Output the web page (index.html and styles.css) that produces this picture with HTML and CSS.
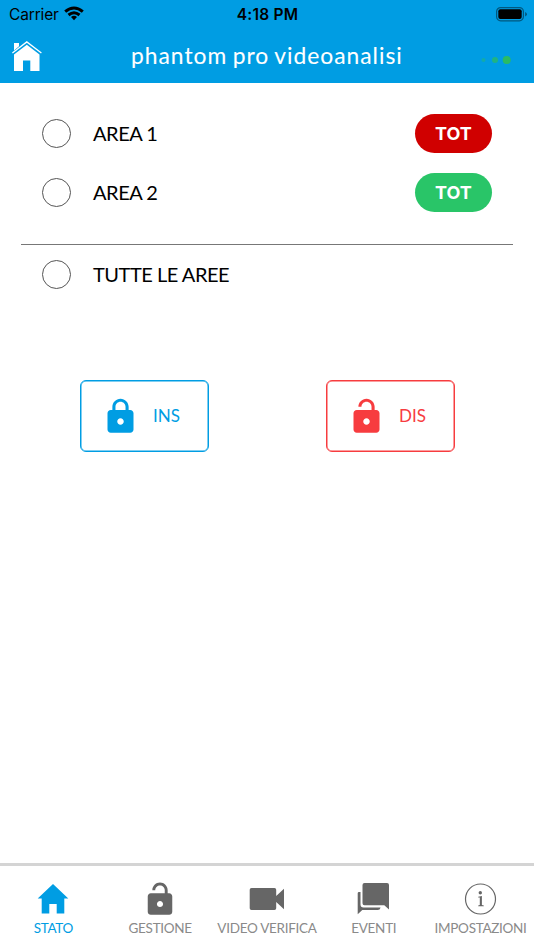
FILE: index.html
```html
<!DOCTYPE html>
<html lang="it">
<head>
<meta charset="utf-8">
<title>phantom pro videoanalisi</title>
<link rel="stylesheet" href="styles.css">
</head>
<body>
<div class="app">
  <header class="header">
    <div class="status">
      <div class="carrier"><span class="carrier-name">Carrier</span>
        <svg class="wifi" viewBox="0 0 20 15"><path d="M10 14.2 7 11.1Q10 8.6 13 11.1Z"/><path class="arc" d="M4.5 9Q10 4.4 15.5 9M1.2 5.700Q10-1.700 18.800 5.700"/></svg>
      </div>
      <span class="clock">4:18 PM</span>
      <svg class="battery" viewBox="0 0 32 15"><rect class="shell" x=".6" y=".6" width="26.8" height="13.2" rx="4"/><rect x="2.3" y="2.3" width="23.4" height="9.8" rx="2"/><path class="tip" d="M29.1 5Q31 5.8 31 7.2T29.1 9.4Z"/></svg>
    </div>
    <div class="titlebar">
      <svg class="house" viewBox="0 0 30 30"><path d="M2 2H7V5.200L2 9.500ZM2 13.500 14.800 3.800 27.500 13.500V30H18.300V19.500H11V30H2Z"/><path class="roof" d="M.4 12 14.800 .9 29.400 12"/></svg>
      <h1 class="title">phantom pro videoanalisi</h1>
      <svg class="dots" viewBox="0 0 32 10"><circle cx="2.500" cy="5" r="2" opacity=".45"/><circle cx="14" cy="5" r="3" opacity=".75"/><circle cx="25.700" cy="5" r="4"/></svg>
    </div>
  </header>
  <main class="main">
    <section class="areas">
      <div class="area"><span class="radio"></span><span class="label">AREA 1</span><span class="pill red">TOT</span></div>
      <div class="area"><span class="radio"></span><span class="label">AREA 2</span><span class="pill green">TOT</span></div>
    </section>
    <div class="area all"><span class="radio"></span><span class="label">TUTTE LE AREE</span></div>
    <div class="actions">
      <button class="action ins"><svg class="lock" viewBox="0 0 24 24"><path d="M18 8h-1V6c0-2.760-2.240-5-5-5S7 3.240 7 6v2H6c-1.100 0-2 .9-2 2v10c0 1.100.9 2 2 2h12c1.100 0 2-.9 2-2V10c0-1.100-.9-2-2-2zm-6 9c-1.100 0-2-.9-2-2s.9-2 2-2 2 .9 2 2-.9 2-2 2zm3.100-9H8.900V6c0-1.710 1.390-3.100 3.100-3.100s3.100 1.390 3.100 3.100v2z"/></svg><span class="action-label">INS</span></button>
      <button class="action dis"><svg class="lock" viewBox="0 0 24 24"><path d="M18 8h-1V6c0-2.760-2.240-5-5-5S7 3.240 7 6h1.900c0-1.710 1.390-3.100 3.100-3.100s3.100 1.390 3.100 3.100v2H6c-1.100 0-2 .9-2 2v10c0 1.100.9 2 2 2h12c1.100 0 2-.9 2-2V10c0-1.100-.9-2-2-2zm-6 9c-1.100 0-2-.9-2-2s.9-2 2-2 2 .9 2 2-.9 2-2 2z"/></svg><span class="action-label">DIS</span></button>
    </div>
  </main>
  <nav class="tabs">
    <div class="tab active"><svg class="icon" viewBox="0 0 38 38"><path d="M19 4 34.300 18.500H30.300V33.500H22.700V24H15.300V33.500H7.700V18.500H3.700Z"/></svg><span class="tab-label">STATO</span></div>
    <div class="tab"><svg class="icon" viewBox="-.4 -.7 24.800 24.800"><path d="M18 8h-1V6c0-2.760-2.240-5-5-5S7 3.240 7 6h1.900c0-1.710 1.390-3.100 3.100-3.100s3.100 1.390 3.100 3.100v2H6c-1.100 0-2 .9-2 2v10c0 1.100.9 2 2 2h12c1.100 0 2-.9 2-2V10c0-1.100-.9-2-2-2zm-6 9c-1.100 0-2-.9-2-2s.9-2 2-2 2 .9 2 2-.9 2-2 2z"/></svg><span class="tab-label">GESTIONE</span></div>
    <div class="tab"><svg class="icon" viewBox="0 0 38 38"><path d="M3.500 8H26.500Q28.200 8 28.200 9.700V16L36 8.800V29.200L28.200 22V28.300Q28.200 30 26.500 30H3.500Q1.700 30 1.700 28.300V9.700Q1.700 8 3.500 8Z"/></svg><span class="tab-label">VIDEO VERIFICA</span></div>
    <div class="tab"><svg class="icon" viewBox="1 0 38 38"><path d="M10.500 3H33Q35 3 35 5V29.500L30.300 25.300H10.500Q8.500 25.300 8.500 23.300V5Q8.500 3 10.500 3ZM5 12H6.500V24.500Q6.500 27.500 9.500 27.500H26.600Q26 30 23.800 30H8.300L3.700 34.300V13.200Q3.700 12 5 12Z"/></svg><span class="tab-label">EVENTI</span></div>
    <div class="tab"><svg class="icon" viewBox="0.500 0 38 38"><circle class="ring" cx="19" cy="19" r="15"/><circle cx="18.800" cy="12.800" r="1.700"/><path d="M16.700 16.800 20.400 16V25L22.300 25.600V26.200H16.700V25.600L18.300 25V17.600L16.700 17.500Z"/></svg><span class="tab-label">IMPOSTAZIONI</span></div>
  </nav>
</div>
</body>
</html>
```

FILE: styles.css
```css
* { box-sizing: border-box; }
body { margin: 0; background: #fff; color: #000; font-family: Lato, sans-serif; }
svg { display: block; flex: none; fill: currentColor; }
.app { width: 534px; height: 950px; display: flex; flex-direction: column; overflow: hidden; }
.header { height: 83px; background: #009de3; flex: none; }
.status { height: 28px; padding: 0 8px 0 9px; display: grid; grid-template-columns: 1fr auto 1fr; align-items: center; font: 16px/28px Inter, sans-serif; }
.carrier { display: flex; align-items: center; gap: 5px; }
.carrier-name { font-size: 15.500px; letter-spacing: -.15px; padding-top: 1px; }
.wifi { width: 20px; height: 15px; margin-top: -2px; }
.arc { fill: none; stroke: currentColor; stroke-width: 3; }
.clock { font-size: 15.500px; font-weight: 600; letter-spacing: .25px; padding-top: 1px; }
.battery { width: 32px; height: 15px; justify-self: end; margin: 0 -2px 1px 0; }
.shell { fill: none; stroke: #00587f; stroke-width: 1.200; }
.tip { fill: #00587f; }
.titlebar { height: 55px; padding: 0 21px 0 12px; display: grid; grid-template-columns: 119px 1fr 32px; align-items: center; color: #fff; }
.house { width: 30px; height: 30px; }
.roof { fill: none; stroke: #fff; stroke-width: 1.300; }
.title { margin: -2px 0 0; font-size: 22.800px; font-weight: 400; line-height: 28px; letter-spacing: 1px; word-spacing: -1.300px; white-space: nowrap; -webkit-text-stroke: .1px; }
.dots { width: 32px; height: 10px; color: #2abb63; justify-self: end; margin-top: 9px; }
.main { flex: 1; padding: 21px 21px 0; }
.areas { height: 141px; border-bottom: 1px solid #777; }
.area { display: flex; align-items: center; height: 59px; padding: 0 21px; font-size: 20px; }
.radio { width: 29px; height: 29px; border: 1.200px solid #555; border-radius: 50%; margin-right: 22px; }
.label { flex: 1; letter-spacing: -.470px; padding-bottom: 2px; }
.pill { width: 77px; height: 39px; border-radius: 20px; color: #fff; font: 650 18px/39px Inter, sans-serif; text-align: center; }
.red { background: #d00000; }
.green { background: #29c568; }
.actions { display: flex; justify-content: space-between; padding: 0 58px 0 59px; margin-top: 76px; }
.action { display: flex; align-items: center; width: 129px; height: 72px; padding: 0 0 0 20px; gap: 13px; border: 1px solid; box-shadow: inset 0 0 0 .5px currentColor; border-radius: 6px; background: #fff; font: 17px Lato, sans-serif; }
.action-label { padding-bottom: 1px; }
.lock { width: 39px; height: 39px; }
.ins { color: #009de3; }
.dis { color: #f73c3f; }
.tabs { height: 87px; border-top: 3px solid #d4d4d4; display: grid; grid-template-columns: repeat(5, 1fr); padding-top: 14px; }
.tab { display: flex; flex-direction: column; align-items: center; min-width: 0; color: #666; }
.icon { width: 38px; height: 38px; }
.tab-label { color: #8a8a8a; font-size: 13.500px; line-height: 20px; letter-spacing: -.290px; white-space: nowrap; }
.active, .active .tab-label { color: #009de3; }
.ring { fill: none; stroke: currentColor; stroke-width: 1.200; }
```
